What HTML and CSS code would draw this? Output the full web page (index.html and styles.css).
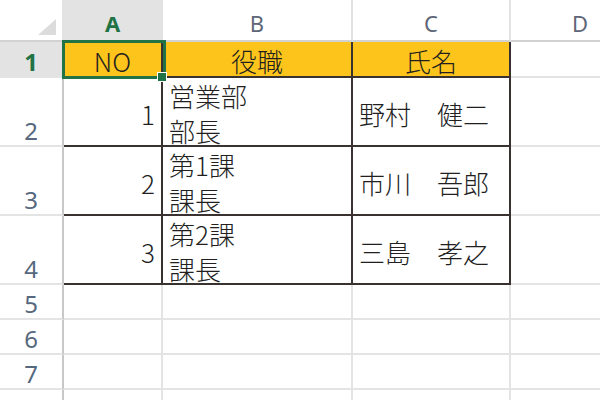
FILE: index.html
```html
<!DOCTYPE html>
<html lang="ja">
<head>
<meta charset="utf-8">
<title>Sheet</title>
<link rel="stylesheet" href="styles.css">
</head>
<body>
<div class="sheet">
  <div class="corner"><svg class="tri" width="18" height="16" viewBox="0 0 18 16"><polygon points="18,0 18,16 0,16" fill="#dcdcdc"/></svg></div>
  <div class="ch sel">A</div>
  <div class="ch">B</div>
  <div class="ch">C</div>
  <div class="ch">D</div>

  <div class="rh sel">1</div>
  <div class="c t gold center">NO</div>
  <div class="c t gold center">役職</div>
  <div class="c t gold center">氏名</div>
  <div class="c"></div>

  <div class="rh">2</div>
  <div class="c t num">1</div>
  <div class="c t two">営業部<br>部長</div>
  <div class="c t name">野村　健二</div>
  <div class="c"></div>

  <div class="rh">3</div>
  <div class="c t num">2</div>
  <div class="c t two">第1課<br>課長</div>
  <div class="c t name">市川　吾郎</div>
  <div class="c"></div>

  <div class="rh">4</div>
  <div class="c t num">3</div>
  <div class="c t two">第2課<br>課長</div>
  <div class="c t name">三島　孝之</div>
  <div class="c"></div>

  <div class="rh">5</div><div class="c"></div><div class="c"></div><div class="c"></div><div class="c"></div>
  <div class="rh">6</div><div class="c"></div><div class="c"></div><div class="c"></div><div class="c"></div>
  <div class="rh">7</div><div class="c"></div><div class="c"></div><div class="c"></div><div class="c"></div>
  <div class="rh"></div><div class="c"></div><div class="c"></div><div class="c"></div><div class="c"></div>

  <div class="selbox"></div>
  <div class="handle"></div>
</div>
</body>
</html>
```

FILE: styles.css
```css
html, body {
  margin: 0;
  padding: 0;
  background: #fff;
  overflow: hidden;
}

.sheet {
  position: relative;
  display: grid;
  grid-template-columns: 64px 99px 190px 158px 140px;
  grid-template-rows: 42px 36px 69px 69px 69px 35px 35px 35px 35px;
  width: 600px;
  height: 400px;
  overflow: hidden;
}

.sheet > div {
  box-sizing: border-box;
}

.corner {
  border-right: 2px solid #e2e2e2;
  border-bottom: 2px solid #d2d2d2;
  display: flex;
  align-items: flex-end;
  justify-content: flex-end;
  padding: 0 6px 5px 0;
}

.tri {
  display: block;
}

.ch {
  border-right: 2px solid #e2e2e2;
  border-bottom: 2px solid #d2d2d2;
  display: flex;
  align-items: center;
  justify-content: center;
  padding-top: 5px;
  font-family: "Noto Sans", "Open Sans", sans-serif;
  font-size: 22px;
  color: #5e6678;
}

.rh {
  border-right: 2px solid #c8c8c8;
  border-bottom: 2px solid #e4e4e4;
  display: flex;
  align-items: flex-end;
  justify-content: center;
  padding-bottom: 2px;
  font-family: "Noto Sans", "Open Sans", sans-serif;
  font-size: 24px;
  line-height: 24px;
  color: #56687e;
}

.ch.sel, .rh.sel {
  background: #e3e3e3;
  color: #217346;
  font-weight: 700;
}

.c {
  border-right: 2px solid #e4e4e4;
  border-bottom: 2px solid #e4e4e4;
}

.t {
  border-right: 2px solid #3a3131;
  border-bottom: 2px solid #3a3131;
  display: flex;
  align-items: center;
  font-family: "Noto Sans CJK JP", "Noto Sans", sans-serif;
  font-size: 26px;
  font-weight: 300;
  color: #231f1f;
  line-height: 35px;
  padding-top: 4px;
}

.gold {
  background: #fdc51c;
  padding-top: 2px;
}

.center {
  justify-content: center;
}

.num {
  justify-content: flex-end;
  padding-right: 6px;
}

.two {
  padding-left: 6px;
  padding-top: 2px;
}

.name {
  padding-left: 6px;
}

.selbox {
  position: absolute;
  left: 62px;
  top: 40px;
  width: 104px;
  height: 39px;
  box-sizing: border-box;
  border: 3px solid #217346;
}

.handle {
  position: absolute;
  left: 157px;
  top: 72px;
  width: 10px;
  height: 10px;
  box-sizing: border-box;
  background: #217346;
  border: 1px solid #fff;
}
```
